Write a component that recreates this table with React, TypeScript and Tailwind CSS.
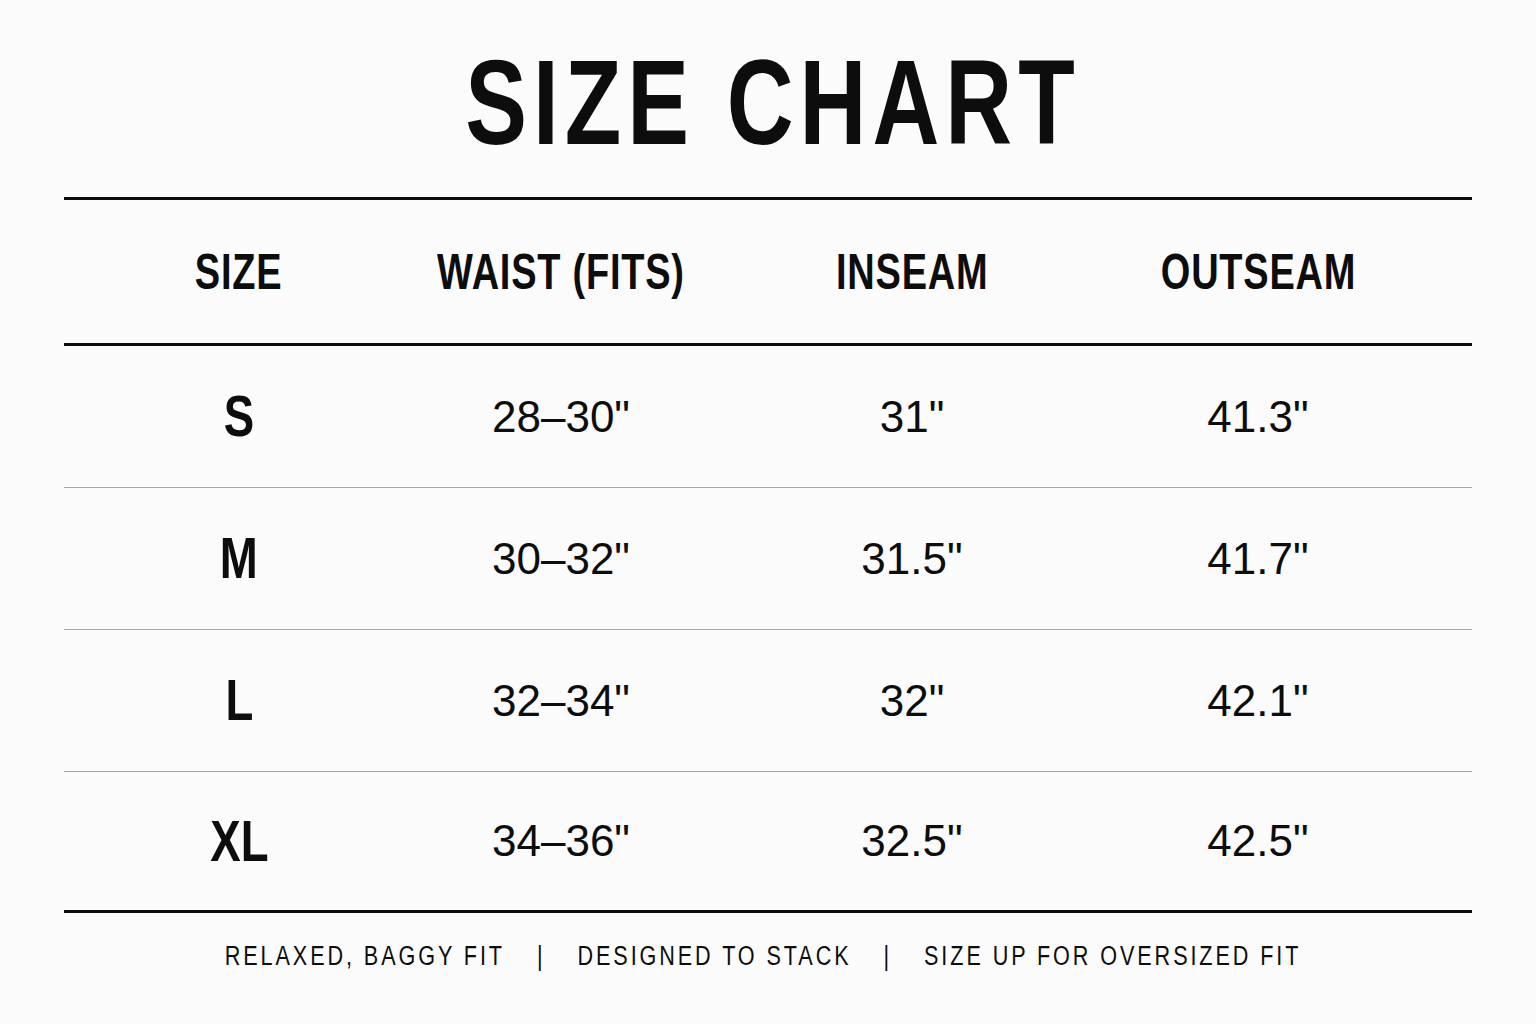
const rows = [
  { size: "S", waist: "28–30\"", inseam: "31\"", outseam: "41.3\"" },
  { size: "M", waist: "30–32\"", inseam: "31.5\"", outseam: "41.7\"" },
  { size: "L", waist: "32–34\"", inseam: "32\"", outseam: "42.1\"" },
  { size: "XL", waist: "34–36\"", inseam: "32.5\"", outseam: "42.5\"" },
];

const cols = "grid grid-cols-[350px_294px_408px_284px_1fr]";
const sans = "font-['Liberation_Sans',Arial,sans-serif]";

export default function App() {
  return (
    <div className={`${sans} min-h-screen bg-[#fbfbfb] text-[#0d0d0d] flex flex-col items-center`}>
      <h1 className="pt-[42px] pl-[12px] h-[163px] text-[121px] leading-none font-bold tracking-[0.065em] whitespace-nowrap scale-x-[0.765]">
        SIZE CHART
      </h1>

      <div className="mt-[34px] w-[1408px]">
        {/* header */}
        <div className={`${cols} h-[149px] border-y-[3px] border-[#0d0d0d] items-center`}>
          {["SIZE", "WAIST (FITS)", "INSEAM", "OUTSEAM"].map((h) => (
            <div key={h} className="flex justify-center">
              <span className="block text-[50px] font-bold leading-none whitespace-nowrap tracking-[0.02em] scale-x-[0.76]">
                {h}
              </span>
            </div>
          ))}
        </div>

        {rows.map((r, i) => (
          <div
            key={r.size}
            className={`${cols} items-center ${i < rows.length - 1 ? "h-[142px] border-b border-[#a8a8a8]" : "h-[141px] border-b-[3px] border-[#0d0d0d]"}`}
          >
            <div className="flex justify-center">
              <span className="block text-[57px] font-bold leading-none scale-x-[0.8]">{r.size}</span>
            </div>
            <div className="text-center text-[44px] leading-none">{r.waist}</div>
            <div className="text-center text-[44px] leading-none">{r.inseam}</div>
            <div className="text-center text-[44px] leading-none">{r.outseam}</div>
          </div>
        ))}

        {/* footer notes */}
        <div className="mt-[30px] flex justify-center">
          <div className="flex items-center pr-[12px] text-[27px] leading-none tracking-[0.135em] whitespace-nowrap scale-x-[0.8]">
            <span>RELAXED, BAGGY FIT</span>
            <span className="mx-[40px]">|</span>
            <span>DESIGNED TO STACK</span>
            <span className="mx-[40px]">|</span>
            <span>SIZE UP FOR OVERSIZED FIT</span>
          </div>
        </div>
      </div>
    </div>
  );
}
